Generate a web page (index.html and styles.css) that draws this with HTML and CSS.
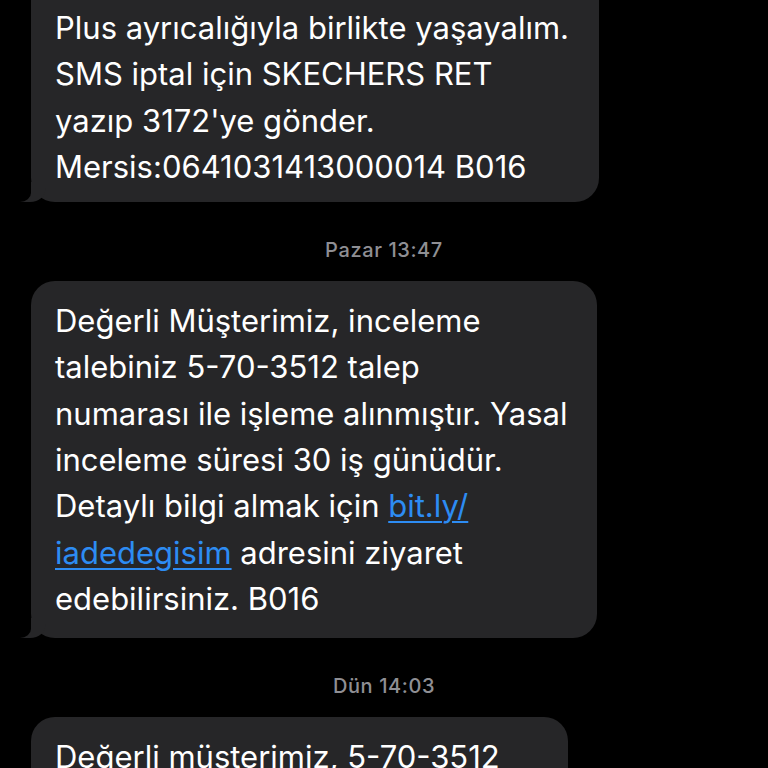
FILE: index.html
```html
<!DOCTYPE html>
<html lang="tr">
<head>
    <meta charset="UTF-8">
    <meta name="viewport" content="width=device-width, initial-scale=1.0">
    <title>Mesajlar</title>
    <link rel="stylesheet" href="styles.css">
</head>
<body>
    <main class="thread">
        <!-- önceki mesajın görünen kısmı -->
        <div class="bubble bubble-cut">
            Plus ayrıcalığıyla birlikte yaşayalım.<br>
            SMS iptal için SKECHERS RET<br>
            yazıp 3172'ye gönder.<br>
            Mersis:0641031413000014 B016
        </div>

        <div class="stamp">Pazar 13:47</div>

        <div class="bubble">
            Değerli Müşterimiz, inceleme<br>
            talebiniz 5-70-3512 talep<br>
            numarası ile işleme alınmıştır. Yasal<br>
            inceleme süresi 30 iş günüdür.<br>
            Detaylı bilgi almak için <a href="#">bit.ly/<br>iadedegisim</a> adresini ziyaret<br>
            edebilirsiniz. B016
        </div>

        <div class="stamp">Dün 14:03</div>

        <div class="bubble bubble-last">
            Değerli müşterimiz, 5-70-3512<br>
            talep numaralı iade/değişim<br>
            talebiniz onaylanmıştır. B016
        </div>
    </main>
</body>
</html>
```

FILE: styles.css
```css
body {
    margin: 0;
    background-color: #000;
    font-family: 'Inter', 'Liberation Sans', sans-serif;
    -webkit-font-smoothing: antialiased;
}
.thread {
    display: flex;
    flex-direction: column;
    align-items: flex-start;
    padding: 0 0 40px 31px;
}
.bubble {
    position: relative;
    background-color: #262628;
    color: #fff;
    font-size: 31px;
    line-height: 46.3px;
    white-space: nowrap;
    padding: 17px 30px 16px 24px;
    border-radius: 24px;
}
.bubble a {
    color: #2d8cf3;
    text-decoration: underline;
    text-decoration-thickness: 2px;
    text-underline-offset: 4px;
}
/* kuyruk */
.bubble::before {
    content: "";
    position: absolute;
    bottom: 0;
    left: -11px;
    width: 26px;
    height: 20px;
    background-color: #262628;
    border-bottom-right-radius: 16px 14px;
}
.bubble::after {
    content: "";
    position: absolute;
    bottom: 0;
    left: -16px;
    width: 16px;
    height: 22px;
    background-color: #000;
    border-bottom-right-radius: 11px 9px;
}
.bubble-cut {
    padding-top: 5px;
    padding-bottom: 12px;
    border-top-left-radius: 0;
    border-top-right-radius: 0;
}
.bubble-last {
    width: 483px;
}
.stamp {
    align-self: center;
    margin: 36px 0 19px -31px;
    font-size: 20px;
    font-weight: 500;
    letter-spacing: 0.6px;
    line-height: 24px;
    color: #8f8f94;
}
```
